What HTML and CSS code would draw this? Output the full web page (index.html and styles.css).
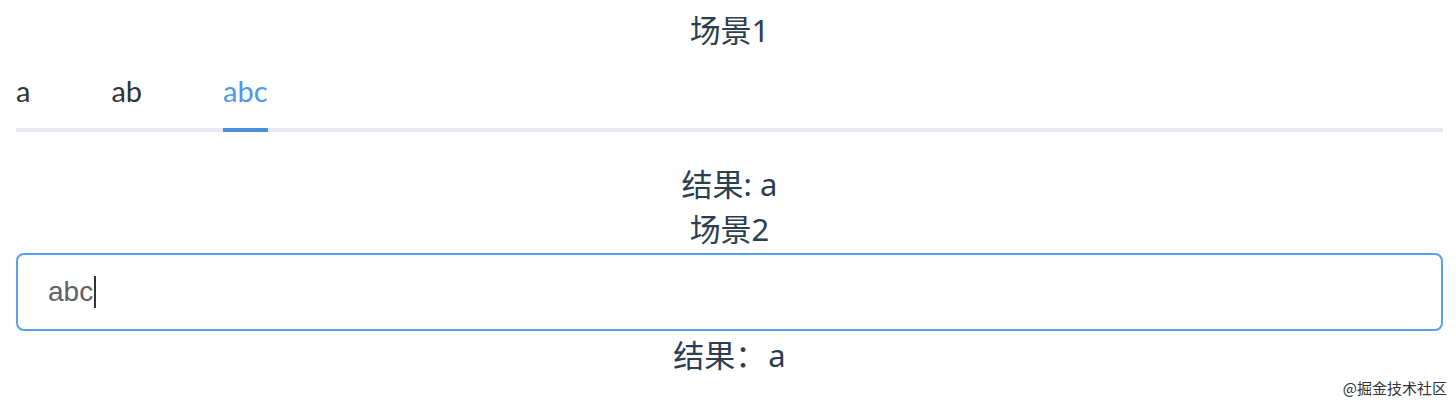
FILE: index.html
```html
<!DOCTYPE html>
<html>
<head>
<meta charset="utf-8">
<link rel="stylesheet" href="styles.css">
</head>
<body>
<div class="app">
  <div class="title t1">场景1</div>
  <div class="tabs">
    <div class="tab">a</div>
    <div class="tab">ab</div>
    <div class="tab active">abc</div>
  </div>
  <div class="title r1">结果: a</div>
  <div class="title t2">场景2</div>
  <div class="input"><span class="val">abc</span><span class="caret"></span></div>
  <div class="title r2">结果：<span class="pad">a</span></div>
</div>
<div class="mark">@掘金技术社区</div>
</body>
</html>
```
FILE: styles.css
```css
html, body { margin: 0; padding: 0; background: #fff; }
body { width: 1456px; height: 404px; overflow: hidden; position: relative; }
.app {
  padding: 0 13px 0 16px;
  font-family: "Lato", "Noto Sans CJK SC", sans-serif;
  color: #2c3e50;
}
.title {
  text-align: center;
  font-size: 31px;
  font-family: "Noto Sans", "Noto Sans CJK SC", sans-serif;
  line-height: 44px;
}
.t1 { margin-top: 8px; }
.tabs {
  display: flex;
  gap: 81px;
  height: 76px;
  border-bottom: 4px solid #e8e8ef;
}
.tab {
  font-size: 29px;
  color: #323233;
  font-family: "Lato", sans-serif;
  position: relative;
  display: flex;
  align-items: center;
}
.tab.active { color: #4f97e8; }
.tab.active::after {
  content: "";
  position: absolute;
  left: 0; right: 0;
  bottom: -4px;
  height: 4px;
  background: #4a8fe0;
}
.r1 { margin-top: 29px; line-height: 46px; }
.t2 { line-height: 44px; }
.input {
  box-sizing: border-box;
  height: 78px;
  border: 2px solid #5aa0ec;
  border-radius: 8px;
  display: flex;
  align-items: center;
  padding-left: 30px;
  margin-top: 2px;
}
.val {
  font-family: "Liberation Sans", sans-serif;
  font-size: 28px;
  color: #606266;
}
.caret {
  display: inline-block;
  width: 2px;
  height: 32px;
  background: #333;
  margin-left: 1px;
}
.r2 { line-height: 48px; }
.pad { margin-left: 2px; }
.mark {
  position: absolute;
  right: 9px;
  bottom: 6px;
  font-family: "Noto Sans CJK SC", sans-serif;
  font-size: 15px;
  color: #333;
}
```
